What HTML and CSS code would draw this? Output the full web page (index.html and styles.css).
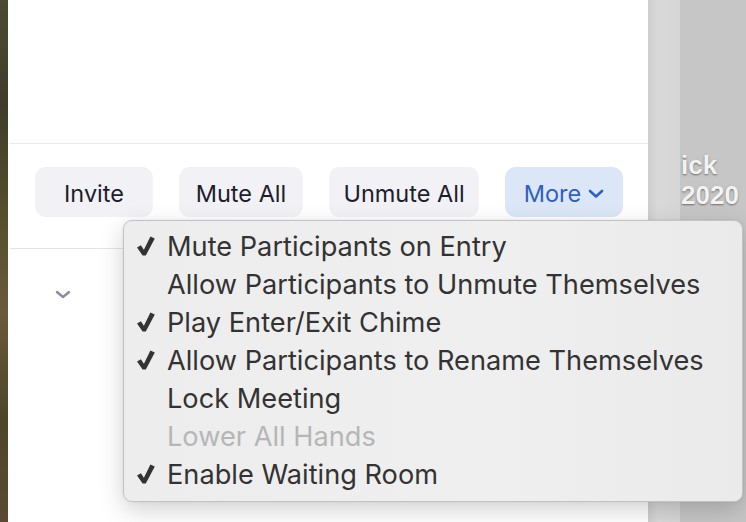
FILE: index.html
```html
<!DOCTYPE html>
<html>
<head>
<meta charset="utf-8">
<link rel="stylesheet" href="styles.css">
</head>
<body>
<div class="screen">
  <div class="wallpaper"></div>
  <div class="panel">
    <div class="panel-top"></div>
    <div class="toolbar">
      <button class="btn">Invite</button>
      <button class="btn">Mute All</button>
      <button class="btn">Unmute All</button>
      <button class="btn btn-more">More
        <svg class="more-chev" width="16" height="10" viewBox="0 0 16 10"><path d="M2 2 L8 7.5 L14 2" fill="none" stroke="#2f5fbf" stroke-width="2.6" stroke-linecap="round" stroke-linejoin="round"/></svg>
      </button>
    </div>
    <div class="list">
      <svg class="row-chev" width="16" height="10" viewBox="0 0 16 10"><path d="M2 2 L8 7 L14 2" fill="none" stroke="#8c8ca0" stroke-width="2.4" stroke-linecap="round" stroke-linejoin="round"/></svg>
    </div>
  </div>
  <div class="strip"></div>
  <div class="desk">
    <div class="desk-text">ick</div>
    <div class="desk-text">2020</div>
  </div>
</div>

<div class="menu">
  <div class="item"><span class="check"><svg width="18" height="20" viewBox="0 0 18 20"><path d="M0 11.6 L3.9 9.2 L6.9 13.8 L13.4 0.4 L17.8 2.6 L8.8 19.6 L5.6 19.6 Z" fill="#333"/></svg></span>Mute Participants on Entry</div>
  <div class="item"><span class="check"></span>Allow Participants to Unmute Themselves</div>
  <div class="item"><span class="check"><svg width="18" height="20" viewBox="0 0 18 20"><path d="M0 11.6 L3.9 9.2 L6.9 13.8 L13.4 0.4 L17.8 2.6 L8.8 19.6 L5.6 19.6 Z" fill="#333"/></svg></span>Play Enter/Exit Chime</div>
  <div class="item"><span class="check"><svg width="18" height="20" viewBox="0 0 18 20"><path d="M0 11.6 L3.9 9.2 L6.9 13.8 L13.4 0.4 L17.8 2.6 L8.8 19.6 L5.6 19.6 Z" fill="#333"/></svg></span>Allow Participants to Rename Themselves</div>
  <div class="item"><span class="check"></span>Lock Meeting</div>
  <div class="item disabled"><span class="check"></span>Lower All Hands</div>
  <div class="item"><span class="check"><svg width="18" height="20" viewBox="0 0 18 20"><path d="M0 11.6 L3.9 9.2 L6.9 13.8 L13.4 0.4 L17.8 2.6 L8.8 19.6 L5.6 19.6 Z" fill="#333"/></svg></span>Enable Waiting Room</div>
</div>
</body>
</html>
```

FILE: styles.css
```css
html, body {
  margin: 0;
  padding: 0;
  width: 746px;
  height: 522px;
  overflow: hidden;
  font-family: Inter, "Liberation Sans", sans-serif;
}

.screen {
  display: flex;
  width: 746px;
  height: 522px;
}

.wallpaper {
  width: 8px;
  flex: none;
  background: linear-gradient(180deg, #4d4a33 0%, #3f3d2a 20%, #59512f 45%, #6a5a3a 60%, #4e4528 80%, #5a4a33 100%);
}

.panel {
  width: 640px;
  flex: none;
  background: #ffffff;
  display: flex;
  flex-direction: column;
}

.panel-top {
  height: 143px;
  margin-left: 2px;
  border-bottom: 1px solid #e7eaf0;
}

.toolbar {
  display: flex;
  align-items: flex-start;
  gap: 26px;
  height: 105px;
  box-sizing: border-box;
  padding: 23px 0 0 25px;
  margin-left: 2px;
  border-bottom: 1px solid #e4e4e6;
}

.btn {
  height: 50px;
  flex: none;
  border: none;
  border-radius: 11px;
  background: #f1f1f6;
  color: #1d1d2b;
  font-family: Inter, "Liberation Sans", sans-serif;
  font-size: 23.5px;
  padding: 2px 0 0 0;
  box-sizing: border-box;
  display: flex;
  align-items: center;
  justify-content: center;
  gap: 7px;
}

.btn:nth-child(1) { width: 118px; }
.btn:nth-child(2) { width: 124px; }
.btn:nth-child(3) { width: 150px; }

.btn-more {
  width: 118px;
  background: #dbe6f6;
  color: #2f5fbf;
}

.more-chev { margin-top: 1px; }

.list {
  padding: 41px 0 0 47px;
}

.row-chev { display: block; }

.strip {
  width: 32px;
  flex: none;
  background: linear-gradient(90deg, #cdcdcd 0%, #d9d9d9 30%, #d6d6d6 100%);
}

.desk {
  flex: 1;
  background: #c6c6c6;
  padding-top: 150px;
  padding-left: 1px;
}

.desk-text {
  font-family: "Liberation Sans", sans-serif;
  font-weight: bold;
  font-size: 26px;
  color: #f2f2f2;
  text-shadow: 0 1px 2px rgba(0,0,0,0.45);
  line-height: 30px;
}

.menu {
  position: absolute;
  left: 123px;
  top: 220px;
  width: 620px;
  height: 282px;
  box-sizing: border-box;
  padding-top: 6px;
  background: linear-gradient(90deg, #ededed 0%, #efefef 60%, #eaeaea 100%);
  border: 1px solid #c3c3c3;
  border-radius: 9px;
  box-shadow: 0 8px 24px rgba(0,0,0,0.18), 0 0 2px rgba(0,0,0,0.1);
}

.item {
  height: 38px;
  display: flex;
  align-items: center;
  font-size: 27.2px;
  color: #333333;
  white-space: nowrap;
}

.item.disabled { color: #b6b6b6; }

.check {
  width: 43px;
  flex: none;
  display: flex;
  justify-content: flex-start;
  padding-left: 13px;
  box-sizing: border-box;
}

.check svg { display: block; }
```
